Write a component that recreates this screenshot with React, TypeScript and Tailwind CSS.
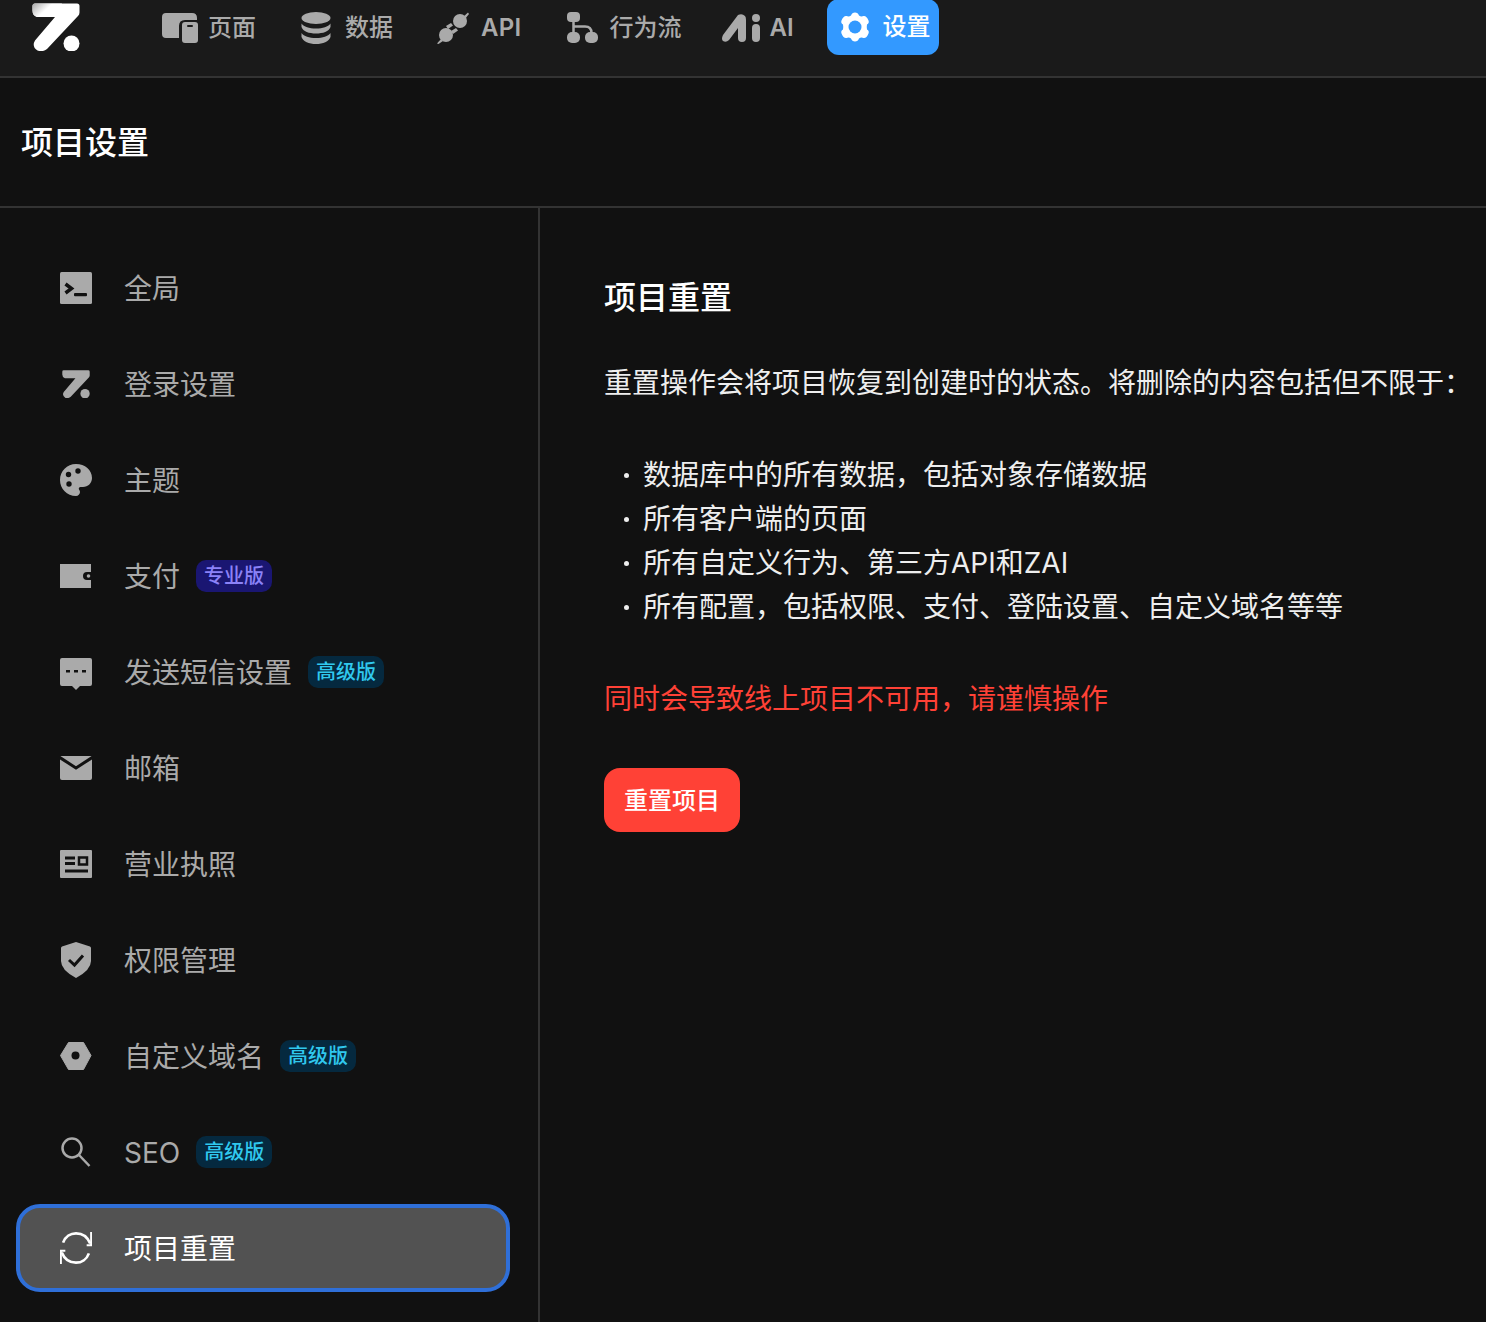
import type { ReactNode } from 'react';

const DARK = '#111111';

const LogoShape = () => (
  <>
    <path d="M3 0.5H45Q47.5 0.5 47.5 3V9.5Q47.5 11.5 46 13L15 46Q10.5 49.5 5.5 47.5Q-0.5 43.5 3 37.5L23 14H5Q0.5 12.5 0.5 7.5V3Q0.5 0.5 3 0.5Z" fill="currentColor" />
    <circle cx="39.5" cy="40.5" r="8" fill="currentColor" />
  </>
);

const PagesIcon = () => (
  <svg width="36" height="30" viewBox="0 0 36 30" fill="none">
    <path d="M4 0H30Q35 0 35 5V7H23Q17 7 17 13V25H4Q0 25 0 21V4Q0 0 4 0Z" fill="#aaaaaa" />
    <path d="M23 9H33Q36 9 36 12V27Q36 30 33 30H23Q20 30 20 27V12Q20 9 23 9Z" fill="#aaaaaa" />
    <rect x="25" y="12" width="6" height="2" rx="1" fill="#1a1a1a" />
  </svg>
);

const DataIcon = () => (
  <svg width="30" height="32" viewBox="0 0 30 32" fill="#aaaaaa">
    <ellipse cx="15" cy="6" rx="14.5" ry="6" />
    <path d="M0.5 11.5C3 15 8 16.5 15 16.5S27 15 29.500 11.500V15C28 19.500 22 21.500 15 21.500S2 19.500 0.500 15Z" />
    <path d="M0.500 21C3 24.500 8 26 15 26S27 24.500 29.500 21V25C28 29.500 22 32 15 32S2 29.500 0.500 25Z" />
  </svg>
);

const PlugIcon = () => (
  <svg width="32" height="32" viewBox="0 0 32 32" fill="#aaaaaa">
    <circle cx="23" cy="9" r="7" />
    <path d="M26 5L31 0.500L32 2L28 7Z" />
    <circle cx="9" cy="23" r="7" />
    <path d="M4 27L0 31.500L1.500 32L6 29Z" />
    <path d="M9 14L14 11L16 13.500L11 17Z" />
    <path d="M14 19L19 16L21 18.500L16 22Z" />
  </svg>
);

const FlowIcon = () => (
  <svg width="31" height="31" viewBox="0 0 31 31" fill="none">
    <rect x="0" y="0" width="13" height="10" rx="4" fill="#aaaaaa" />
    <rect x="0" y="20" width="13" height="11" rx="5" fill="#aaaaaa" />
    <rect x="18" y="20" width="13" height="11" rx="5" fill="#aaaaaa" />
    <path d="M6.500 9V21M6.500 14.500H18Q24.500 14.500 24.500 21" stroke="#aaaaaa" strokeWidth="2.500" />
  </svg>
);

const AiIcon = () => (
  <svg width="40" height="28" viewBox="0 0 40 28" fill="#aaaaaa">
    <path d="M16 1Q20 -1 23 2Q24 3 24 6V24Q24 28 20 28Q16 28 16 24V14L7 26Q4 29 1 27Q-1 25 1 21Z" />
    <circle cx="34" cy="4" r="4" />
    <rect x="30" y="10" width="8" height="18" rx="4" />
  </svg>
);

const GearIcon = () => (
  <svg width="30" height="32" viewBox="0 0 30 32">
    <path d="M15 1.500Q18 1.500 19 4.500Q21 6 23.500 5Q26.500 4.500 28.500 9.500Q29.500 12 27 13.500Q26.500 16 27 18.500Q29.500 20 28.500 22.500Q26.500 27.500 23.500 27Q21 26 19 27.500Q18 30.500 15 30.500Q12 30.500 11 27.500Q9 26 6.500 27Q3.500 27.500 1.500 22.500Q0.500 20 3 18.500Q3.500 16 3 13.500Q0.500 12 1.500 9.500Q3.500 4.500 6.500 5Q9 6 11 4.500Q12 1.500 15 1.500Z" fill="#ffffff" />
    <circle cx="15" cy="16" r="6.500" fill="#3399ff" />
  </svg>
);

const TerminalIcon = () => (
  <svg width="32" height="32" viewBox="0 0 32 32">
    <rect width="32" height="32" rx="1.500" fill="currentColor" />
    <path d="M5.500 12L11.500 16.500L5.500 21" fill="none" stroke={DARK} strokeWidth="3.500" />
    <rect x="14" y="21" width="13" height="3.200" rx="1" fill={DARK} />
  </svg>
);

const PaletteIcon = () => (
  <svg width="32" height="32" viewBox="0 0 32 32">
    <path d="M16 0C7 0 0 7.200 0 16S7 32 16 32C18.200 32 20 30.200 20 28C20 27 19.600 26.200 19 25.500C18.400 24.500 19 23 20.500 23H23C28 23 32 19 32 14C32 6 25 0 16 0Z" fill="currentColor" />
    <circle cx="8.500" cy="10.500" r="2.700" fill={DARK} />
    <circle cx="18" cy="7" r="2.700" fill={DARK} />
    <circle cx="9" cy="20" r="2.700" fill={DARK} />
  </svg>
);

const WalletIcon = () => (
  <svg width="32" height="32" viewBox="0 0 32 32">
    <path d="M0 4H31V12H27Q23 12 23 16Q23 20 27 20H31V28H0Z" fill="currentColor" />
    <circle cx="28.500" cy="16" r="1.800" fill="currentColor" />
  </svg>
);

const SmsIcon = () => (
  <svg width="32" height="32" viewBox="0 0 32 32" className="mt-1">
    <path d="M2 0H30Q32 0 32 2V26Q32 28 30 28H20L16 32L12 28H2Q0 28 0 26V2Q0 0 2 0Z" fill="currentColor" />
    <rect x="6" y="12" width="4" height="2.500" fill={DARK} />
    <rect x="14" y="12" width="4" height="2.500" fill={DARK} />
    <rect x="22" y="12" width="4" height="2.500" fill={DARK} />
  </svg>
);

const MailIcon = () => (
  <svg width="32" height="32" viewBox="0 0 32 32">
    <path d="M0 4H32V26Q32 28 30 28H2Q0 28 0 26Z" fill="currentColor" />
    <path d="M-1 5L16 16L33 5" fill="none" stroke={DARK} strokeWidth="3" />
  </svg>
);

const LicenseIcon = () => (
  <svg width="32" height="32" viewBox="0 0 32 32">
    <rect y="2" width="32" height="28" rx="1" fill="currentColor" />
    <rect x="5" y="8.500" width="10" height="3" fill={DARK} />
    <rect x="5" y="14" width="10" height="3" fill={DARK} />
    <rect x="5" y="21.500" width="23" height="3" fill={DARK} />
    <rect x="19" y="9.500" width="8" height="7" fill="none" stroke={DARK} strokeWidth="2.500" />
  </svg>
);

const ShieldIcon = () => (
  <svg width="32" height="36" viewBox="0 0 32 36">
    <path d="M16 0L30 4.500Q31 5 31 6V19Q31 28 16 36Q1 28 1 19V6Q1 5 2 4.500Z" fill="currentColor" />
    <path d="M9 18L14.500 23L23 13.500" fill="none" stroke={DARK} strokeWidth="3" />
  </svg>
);

const HexIcon = () => (
  <svg width="32" height="32" viewBox="0 0 32 32">
    <path d="M8.500 2.500H23.500L31 15.500L23.500 29.500H8.500L0.500 15.500Z" fill="currentColor" stroke="currentColor" strokeWidth="1" strokeLinejoin="round" />
    <circle cx="15.500" cy="15.500" r="4" fill={DARK} />
  </svg>
);

const SearchIcon = () => (
  <svg width="32" height="32" viewBox="0 0 32 32" fill="none" stroke="currentColor" strokeWidth="2.500">
    <circle cx="12" cy="12" r="9.500" />
    <path d="M19 19L29.500 30" />
  </svg>
);

const ResetIcon = () => (
  <svg width="36" height="36" viewBox="0 0 36 36" fill="none" stroke="#ffffff" strokeWidth="3">
    <path d="M3.500 12C6 5 12 1.500 18 1.500C25 1.500 31 5.500 34 13" />
    <path d="M35 0V15H30" strokeWidth="2.200" />
    <path d="M32.500 24C30 31 24 34.500 18 34.500C11 34.500 5 30.500 2 23" />
    <path d="M1 36V21H6" strokeWidth="2.200" />
  </svg>
);

const Badge = ({ kind }: { kind: 'pro' | 'adv' }) =>
  kind === 'pro' ? (
    <span className="ml-4 flex h-8 w-[76px] items-center justify-center rounded-[10px] bg-[#1a1672] text-[20px] font-medium text-[#8b82f8]">专业版</span>
  ) : (
    <span className="ml-4 flex h-8 w-[76px] items-center justify-center rounded-[10px] bg-[#05293f] text-[20px] font-medium text-[#30c8ee]">高级版</span>
  );

const navItems: { label: string; icon: ReactNode; cls: string }[] = [
  { label: '页面', icon: <PagesIcon />, cls: 'gap-[10px] mr-px font-medium' },
  { label: '数据', icon: <DataIcon />, cls: 'gap-[14px] font-medium' },
  { label: 'API', icon: <PlugIcon />, cls: 'gap-3 mr-px font-semibold tracking-[0.3px]' },
  { label: '行为流', icon: <FlowIcon />, cls: 'gap-3 font-medium' },
  { label: 'AI', icon: <AiIcon />, cls: 'gap-2 -ml-1 mr-px font-semibold' },
];

const menu: { label: string; icon: ReactNode; badge?: 'pro' | 'adv' }[] = [
  { label: '全局', icon: <TerminalIcon /> },
  {
    label: '登录设置',
    icon: (
      <svg width="32" height="28" viewBox="-3 0 54 48">
        <LogoShape />
      </svg>
    ),
  },
  { label: '主题', icon: <PaletteIcon /> },
  { label: '支付', icon: <WalletIcon />, badge: 'pro' },
  { label: '发送短信设置', icon: <SmsIcon />, badge: 'adv' },
  { label: '邮箱', icon: <MailIcon /> },
  { label: '营业执照', icon: <LicenseIcon /> },
  { label: '权限管理', icon: <ShieldIcon /> },
  { label: '自定义域名', icon: <HexIcon />, badge: 'adv' },
  { label: 'SEO', icon: <SearchIcon />, badge: 'adv' },
];

const wipes = [
  '数据库中的所有数据，包括对象存储数据',
  '所有客户端的页面',
  '所有自定义行为、第三方API和ZAI',
  '所有配置，包括权限、支付、登陆设置、自定义域名等等',
];

export default function App() {
  return (
    <div className="h-[1322px] overflow-hidden bg-[#111111] [font-family:Inter,'Noto_Sans_CJK_SC',sans-serif]">
      {/* Top bar */}
      <header className="flex h-[78px] items-start border-b-2 border-[#333333] bg-[#1a1a1a] pl-8">
        <svg width="48" height="48" viewBox="0 0 48 48" className="mt-[3px] text-white">
          <defs>
            <linearGradient id="logoFade" x1="0" y1="0" x2="1" y2="0.5">
              <stop offset="0" stopColor="#a8a8a8" />
              <stop offset="0.55" stopColor="#ffffff" />
            </linearGradient>
          </defs>
          <g className="text-white">
            <LogoShape />
          </g>
          <path d="M3 0.5H30L23 14H5Q0.5 12.5 0.5 7.500V3Q0.500 0.500 3 0.500Z" fill="url(#logoFade)" />
        </svg>
        <nav className="ml-[70px] flex items-start gap-5">
          {navItems.map((item) => (
            <div key={item.label} className={`flex h-[55px] items-center px-3 text-[24px] text-[#aaaaaa] ${item.cls}`}>
              {item.icon}
              <span>{item.label}</span>
            </div>
          ))}
          <div className="flex h-[56px] -mt-px items-center gap-[13px] rounded-xl bg-[#3399ff] pr-2 pl-[13px] text-[24px] font-medium text-white">
            <GearIcon />
            <span>设置</span>
          </div>
        </nav>
      </header>

      {/* Page title */}
      <div className="flex h-[130px] items-center border-b-2 border-[#333333] pt-[2px] pl-[21px]">
        <h1 className="text-[32px] font-medium text-white">项目设置</h1>
      </div>

      <div className="flex">
        {/* Side menu */}
        <aside className="flex h-[1114px] w-[540px] shrink-0 flex-col gap-2 border-r-2 border-[#333333] pt-9 pr-[28px] pl-4">
          {menu.map((item) => (
            <div key={item.label} className="flex h-[88px] shrink-0 items-center pl-11 text-[28px] text-[#aaaaaa]">
              <span className="mr-8 flex w-8 justify-center">{item.icon}</span>
              <span className="pt-[2px]">{item.label}</span>
              {item.badge && <Badge kind={item.badge} />}
            </div>
          ))}
          <div className="flex h-[88px] shrink-0 items-center rounded-[24px] border-4 border-[#2f6fd8] bg-[#525252] pl-10 text-[28px] text-white">
            <span className="mr-8 flex w-8 justify-center">
              <ResetIcon />
            </span>
            <span className="pt-[2px]">项目重置</span>
          </div>
        </aside>

        {/* Reset panel */}
        <main className="min-w-0 flex-1 pt-[66px] pl-16 whitespace-nowrap">
          <h2 className="text-[32px] leading-12 font-medium text-white">项目重置</h2>
          <p className="mt-[39px] text-[28px] leading-11 text-[#eeeeee]">重置操作会将项目恢复到创建时的状态。将删除的内容包括但不限于：</p>
          <ul className="mt-12 text-[28px] leading-11 text-[#eeeeee]">
            {wipes.map((line) => (
              <li key={line} className="flex items-center pl-5">
                <span className="mr-[14px] h-[5px] w-[5px] rounded-full bg-[#eeeeee]" />
                <span>{line}</span>
              </li>
            ))}
          </ul>
          <p className="mt-12 text-[28px] leading-11 text-[#ff4136]">同时会导致线上项目不可用，请谨慎操作</p>
          <button className="mt-[47px] h-16 w-[136px] rounded-2xl bg-[#ff4136] pt-[2px] text-[24px] font-medium text-white">重置项目</button>
        </main>
      </div>
    </div>
  );
}
